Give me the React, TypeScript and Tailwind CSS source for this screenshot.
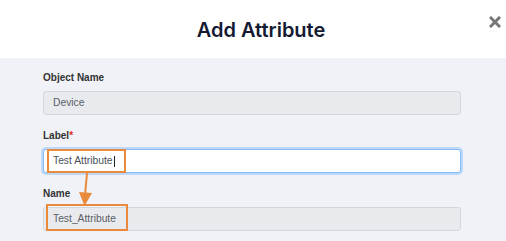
import React from "react";

export default function App() {
  return (
    <div className="relative w-[506px] h-[241px] overflow-hidden bg-[#f1f2f7]" style={{ fontFamily: "Inter, 'Liberation Sans', sans-serif" }}>
      <div className="relative h-[58px] bg-white flex items-center justify-center">
        <h1 className="text-[20px] font-semibold text-[#151a33] leading-none tracking-[0px] mt-[1px] ml-[16px]">Add Attribute</h1>
        <svg className="absolute left-[489px] top-[16px]" width="12" height="12" viewBox="0 0 12 12">
          <path d="M2 2 L10 10 M10 2 L2 10" stroke="#777" strokeWidth="3" strokeLinecap="square" />
        </svg>
      </div>
      <div className="pl-[43px] pr-[45px] pt-[12px]">
        <div className="mb-[13px]">
          <div className="h-[16px] mb-[5px] text-[10px] font-bold text-[#333] leading-[16px]" style={{ fontFamily: "'Liberation Sans', Arial, sans-serif" }}>Object Name</div>
          <div className="h-[24px] rounded-[3px] border border-[#d3d6da] bg-[#e8eaed] flex items-center pl-[9px] text-[10.3px] text-[#5a6068]" style={{ fontFamily: "'Liberation Sans', Arial, sans-serif" }}>Device</div>
        </div>
        <div className="mb-[13px]">
          <div className="h-[16px] mb-[5px] text-[10px] font-bold text-[#333] leading-[16px]" style={{ fontFamily: "'Liberation Sans', Arial, sans-serif" }}>
            Label<span className="text-[#e0262b]">*</span>
          </div>
          <div className="h-[24px] rounded-[3px] border border-[#86bbf5] shadow-[0_0_0_2px_#bcd9fb] bg-white flex items-center pl-[9px] text-[10.3px] text-[#4a4f57]" style={{ fontFamily: "'Liberation Sans', Arial, sans-serif" }}>
            Test Attribute<span className="inline-block w-[1px] h-[11px] bg-[#222] ml-[1px]"></span>
          </div>
        </div>
        <div>
          <div className="h-[16px] mb-[5px] text-[10px] font-bold text-[#333] leading-[16px]" style={{ fontFamily: "'Liberation Sans', Arial, sans-serif" }}>Name</div>
          <div className="h-[24px] rounded-[3px] border border-[#d3d6da] bg-[#e8eaed] flex items-center pl-[9px] text-[10.3px] text-[#5a6068]" style={{ fontFamily: "'Liberation Sans', Arial, sans-serif" }}>Test_Attribute</div>
        </div>
      </div>
      <svg className="absolute left-0 top-0 pointer-events-none" width="506" height="241" viewBox="0 0 506 241">
        <rect x="48" y="150" width="77" height="22" fill="none" stroke="#ea8a3d" strokeWidth="2" />
        <rect x="47" y="205" width="80" height="25" fill="none" stroke="#ea8a3d" strokeWidth="2" />
        <line x1="87" y1="173" x2="85.2" y2="193" stroke="#ea8a3d" strokeWidth="2" />
        <polygon points="79,192 92,193 84.5,206" fill="#ea8a3d" />
      </svg>
    </div>
  );
}
